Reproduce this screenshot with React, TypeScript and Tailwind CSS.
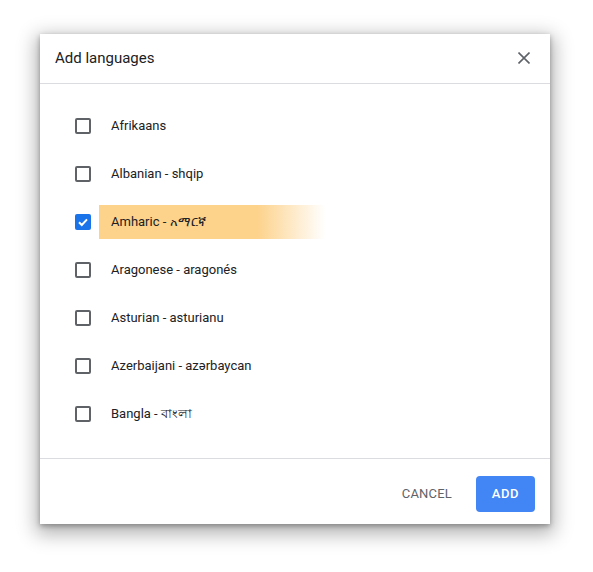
import React from "react";

const languages = [
  { label: "Afrikaans", checked: false },
  { label: "Albanian - shqip", checked: false },
  { label: "Amharic - አማርኛ", checked: true },
  { label: "Aragonese - aragonés", checked: false },
  { label: "Asturian - asturianu", checked: false },
  { label: "Azerbaijani - azərbaycan", checked: false },
  { label: "Bangla - বাংলা", checked: false },
];

function Checkbox({ checked }: { checked: boolean }) {
  if (checked) {
    return (
      <div className="w-4 h-4 rounded-[2px] bg-[#1a73e8] flex items-center justify-center shrink-0">
        <svg width="12" height="12" viewBox="0 0 12 12" fill="none">
          <path d="M2 6.2 L4.8 9 L10 3.4" stroke="white" strokeWidth="2" />
        </svg>
      </div>
    );
  }
  return <div className="w-4 h-4 rounded-[2px] border-2 border-[#5f6368] shrink-0" />;
}

export default function App() {
  return (
    <div className="min-h-[572px] bg-white pt-[34px] pl-[40px] font-['Roboto',sans-serif]">
      <div className="w-[510px] h-[490px] bg-white flex flex-col shadow-[0_6px_18px_4px_rgba(0,0,0,0.3),0_2px_5px_rgba(0,0,0,0.3)]">
        <div className="h-[50px] flex items-center justify-between pl-[15px] pr-[14px] border-b border-[#dadce0]">
          <h1 className="text-[15px] text-[#202124]">Add languages</h1>
          <button className="w-6 h-6 flex items-center justify-center text-[#5f6368] pb-[2px]">
            <svg width="12" height="12" viewBox="0 0 12 12">
              <path d="M0.5 0.5 L11.5 11.5 M11.5 0.5 L0.5 11.5" stroke="currentColor" strokeWidth="1.6" />
            </svg>
          </button>
        </div>

        <div className="flex-1 pt-[18px] pb-[20px] border-b border-[#dadce0]">
          {languages.map((l) => (
            <div key={l.label} className="h-12 flex items-center pl-[35px]">
              <Checkbox checked={l.checked} />
              <div
                className={
                  l.checked
                    ? "ml-2 h-[34px] w-[226px] flex items-center pl-3 bg-[linear-gradient(to_right,#fdd28b_0%,#fdd28b_70%,rgba(253,210,139,0)_100%)]"
                    : "ml-2 h-[34px] flex items-center pl-3"
                }
              >
                <span className="text-[13px] text-[#202124] whitespace-nowrap">{l.label}</span>
              </div>
            </div>
          ))}
        </div>

        <div className="h-[65px] flex items-start justify-end gap-2 pt-[17px] pr-[15px]">
          <button className="h-9 px-4 text-[13px] text-[#5f6368] tracking-[0.2px]">CANCEL</button>
          <button className="h-9 w-[59px] rounded-[4px] bg-[#4285f4] text-white text-[13px] font-medium tracking-[0.6px]">
            ADD
          </button>
        </div>
      </div>
    </div>
  );
}
